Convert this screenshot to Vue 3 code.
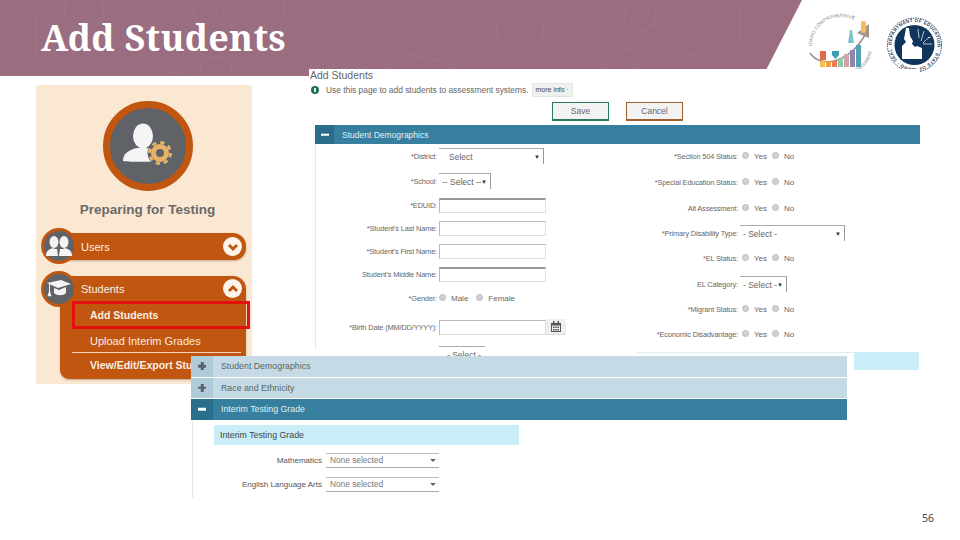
<template>
  <div class="slide">
    <header class="banner">
      <svg class="texture" width="810" height="76" viewBox="0 0 810 76" fill="none" stroke="#fff" stroke-opacity="0.06" stroke-width="1">
        <path d="M0 12h36v44H0M8 22h24M8 32h24M8 42h24" />
        <circle cx="84" cy="10" r="20" />
        <path d="M230 0l-16 26M285 0v20h36" />
        <circle cx="216" cy="72" r="16" />
        <circle cx="205" cy="12" r="12" />
        <path d="M130 62l60 14M380 76l16-24 50 10 12 14" />
        <circle cx="520" cy="30" r="24" />
        <circle cx="640" cy="16" r="16" />
        <path d="M600 76l8-14h24l12 14M690 0l-20 30 40 14 20-44" />
        <path d="M640 8l-22 40 78 8zM650 24l-12 20 40 4zM705 0l24 14 16-14M740 8v30" />
      </svg>
      <h1 class="slide-title">Add Students</h1>
    </header>

    <div class="logos">
      <svg class="logo-cc" width="66" height="60" viewBox="0 0 66 60">
        <defs>
          <path id="ccArc" d="M5 33A29 29 0 0 1 56 14" />
          <path id="ccArc2" d="M46 60A29 29 0 0 0 65 38" />
        </defs>
        <text class="logo-text" font-size="4.800" fill="#8d8d8d"><textPath href="#ccArc">IDAHO COMPREHENSIVE</textPath></text>
        <text class="logo-text" font-size="4.400" fill="#8d8d8d"><textPath href="#ccArc2">ASSESSMENT</textPath></text>
        <path d="M3 40C14 56 42 50 58 22" fill="none" stroke="#a3938f" stroke-width="1.600" />
        <path d="M50 20l12-9 0 14z" fill="#a3938f" />
        <rect x="13" y="38" width="6" height="9" fill="#e2694c" />
        <rect x="13" y="48" width="5" height="6" fill="#f0c24b" />
        <rect x="19" y="48" width="5" height="6" fill="#f09a4c" />
        <rect x="25" y="48" width="5" height="6" fill="#ec7d55" />
        <path d="M25 38h7v4l-3.500 4-3.500-4z" fill="#3a9fb0" />
        <rect x="31" y="45" width="5" height="9" fill="#8ec9a8" />
        <rect x="37" y="41" width="5" height="13" fill="#cfa3a5" />
        <rect x="43" y="37" width="5" height="17" fill="#8e86ad" />
        <rect x="49" y="32" width="5" height="22" fill="#4fa3b5" />
        <path d="M42 24l1-7 2 0 1 7 1 6h-6z" fill="#7cc3c5" />
        <rect x="54" y="8" width="5" height="12" rx="2" fill="#f3bd58" />
      </svg>
      <svg class="logo-seal" width="55" height="56" viewBox="0 0 55 56">
        <defs>
          <path id="sealArc" d="M4.500 28a23 23 0 1 1 46 0a23 23 0 1 1 -46 0" />
          <clipPath id="sealClip"><circle cx="27.500" cy="28" r="19" /></clipPath>
        </defs>
        <circle cx="27.500" cy="28" r="27" fill="#fff" stroke="#1d3f63" stroke-width="1" stroke-dasharray="1.500 1" />
        <text class="logo-text" font-size="4.500" font-weight="700" fill="#1d3f63"><textPath href="#sealArc" textLength="140">DEPARTMENT OF EDUCATION · STATE OF IDAHO · SEAL</textPath></text>
        <circle cx="27.500" cy="28" r="20" fill="#10355c" />
        <g clip-path="url(#sealClip)">
          <path d="M19 11h3l1 8 3 5-1 3 3 3 2-1 5 2v11H15V29l4-4-2-3z" fill="#fff" />
          <path d="M31 12l1 9M37 14l-3 10M42 20l-6 6M45 27h-9M44 20l-3 1" stroke="#fff" stroke-width="0.700" />
        </g>
      </svg>
    </div>

    <aside class="nav-card">
      <div class="hero-circle">
        <svg width="62" height="50" viewBox="0 0 62 50">
          <ellipse cx="26" cy="13" rx="10" ry="12.500" fill="#f5f5f5" />
          <path d="M6 38c0-7 5-11 14-13h10c3 1 5 2 7 4v9.500c-10 .5-21 .5-31-.5z" fill="#f5f5f5" />
          <circle cx="43" cy="30" r="12.500" fill="#5f6368" />
          <circle cx="43" cy="30" r="6.500" fill="none" stroke="#e6b469" stroke-width="5" />
          <circle cx="43" cy="30" r="10.500" fill="none" stroke="#e6b469" stroke-width="3" stroke-dasharray="4.200 4.050" />
        </svg>
      </div>
      <div class="nav-title">Preparing for Testing</div>

      <div class="nav-group">
        <div class="nav-head">
          <span class="nav-icon">
            <svg width="26" height="22" viewBox="0 0 26 22" fill="#f4f4f4">
              <ellipse cx="8" cy="7" rx="4.500" ry="6" />
              <ellipse cx="18" cy="7" rx="4.500" ry="6" />
              <path d="M0 21c0-5 3-7 7-8l2 1 2 0 1 7zM26 21c0-5-3-7-7-8l-2 1-3 0-1 7z" />
            </svg>
          </span>
          <span class="nav-label">Users</span>
          <span class="chev">
            <svg width="12" height="12" viewBox="0 0 12 12" fill="none" stroke="#c0560f" stroke-width="3"><path d="M2 4l4 4 4-4" /></svg>
          </span>
        </div>
      </div>

      <div class="nav-group open">
        <div class="nav-head">
          <span class="nav-icon">
            <svg width="26" height="22" viewBox="0 0 26 22" fill="#f4f4f4">
              <path d="M1 5l14-3 10 4-13 4z" />
              <path d="M8 10l5 2 7-3v6c-3 3-9 3-12 0z" />
              <path d="M3 6l1 .3v7l1.500 5H1.500l1.500-5z" />
            </svg>
          </span>
          <span class="nav-label">Students</span>
          <span class="chev">
            <svg width="12" height="12" viewBox="0 0 12 12" fill="none" stroke="#c0560f" stroke-width="3"><path d="M2 8l4-4 4 4" /></svg>
          </span>
        </div>
        <ul class="nav-sub">
          <li class="current">Add Students</li>
          <li>Upload Interim Grades</li>
          <li class="bold">View/Edit/Export Students</li>
        </ul>
      </div>
    </aside>

    <section class="shot main-shot">
      <div class="page-title">Add Students</div>
      <div class="info-line">
        <span class="info-dot"></span>
        <span>Use this page to add students to assessment systems.</span>
        <span class="more">more info ·</span>
      </div>
      <div class="actions">
        <button class="btn save">Save</button>
        <button class="btn cancel">Cancel</button>
      </div>
      <div class="section-head">
        <span class="toggle"><i class="minus"></i></span>
        <span>Student Demographics</span>
      </div>
      <div class="form">
        <div class="col left">
          <div v-for="r in leftRows" :key="r.label" class="row">
            <label>{{ r.label }}</label>
            <div v-if="r.select" class="select" :class="r.cls">{{ r.select }}<span class="tri">▼</span></div>
            <input v-else-if="r.input" class="field" :class="{ heavy: r.heavy }" type="text" />
            <div v-else-if="r.date" class="date">
              <input class="field" type="text" />
              <span class="cal">
                <svg width="10" height="11" viewBox="0 0 10 11" fill="#555">
                  <path d="M0 2h10v9H0zM1 4.500v5.500h8V4.500z" fill-rule="evenodd" />
                  <path d="M2 0h1.500v3H2zM6.500 0H8v3H6.500zM2 5.500h1.500V7H2zM4.300 5.500h1.500V7H4.300zM6.500 5.500H8V7H6.500zM2 8h1.500v1.500H2zM4.300 8h1.500v1.500H4.300zM6.500 8H8v1.500H6.500z" />
                </svg>
              </span>
            </div>
            <div v-else class="radios">
              <span v-for="o in r.options" :key="o" class="radio"><input type="radio" disabled />{{ o }}</span>
            </div>
          </div>
          <div class="row"><label></label><div class="select stub">- Select -</div></div>
        </div>
        <div class="col right">
          <div v-for="r in rightRows" :key="r.label" class="row">
            <label>{{ r.label }}</label>
            <div v-if="r.select" class="select" :class="r.cls">{{ r.select }}<span class="tri">▼</span></div>
            <div v-else class="radios">
              <span v-for="o in yn" :key="o" class="radio"><input type="radio" disabled />{{ o }}</span>
            </div>
          </div>
        </div>
      </div>
      <div class="strip"></div>
    </section>

    <section class="shot grade-shot">
      <div class="acc closed">
        <span class="toggle"><i class="minus"></i><i class="plus"></i></span>
        <span>Student Demographics</span>
      </div>
      <div class="acc closed">
        <span class="toggle"><i class="minus"></i><i class="plus"></i></span>
        <span>Race and Ethnicity</span>
      </div>
      <div class="acc active">
        <span class="toggle"><i class="minus"></i></span>
        <span>Interim Testing Grade</span>
      </div>
      <div class="grade-body">
        <div class="sub-head">Interim Testing Grade</div>
        <div class="grade-row">
          <label>Mathematics</label>
          <div class="multi">None selected<span class="caret"></span></div>
        </div>
        <div class="grade-row">
          <label>English Language Arts</label>
          <div class="multi">None selected<span class="caret"></span></div>
        </div>
      </div>
    </section>

    <div class="page-num">56</div>
  </div>
</template>

<script setup>
const yn = ['Yes', 'No']

const leftRows = [
  { label: '*District:', select: 'Select', cls: 'district' },
  { label: '*School:', select: '-- Select --', cls: 'school' },
  { label: '*EDUID:', input: true, heavy: true },
  { label: "*Student's Last Name:", input: true },
  { label: "*Student's First Name:", input: true },
  { label: "Student's Middle Name:", input: true, heavy: true },
  { label: '*Gender:', options: ['Male', 'Female'] },
  { label: '*Birth Date (MM/DD/YYYY):', date: true }
]

const rightRows = [
  { label: '*Section 504 Status:' },
  { label: '*Special Education Status:' },
  { label: 'Alt Assessment:' },
  { label: '*Primary Disability Type:', select: '- Select -', cls: 'disability' },
  { label: '*EL Status:' },
  { label: 'EL Category:', select: '- Select -', cls: 'category' },
  { label: '*Migrant Status:' },
  { label: '*Economic Disadvantage:' }
]
</script>

<style>
html,
body {
  margin: 0;
  background: #fff;
}
</style>

<style scoped>
.slide {
  position: relative;
  width: 960px;
  height: 540px;
  overflow: hidden;
  background: #fff;
  font-family: "Liberation Sans", Arial, sans-serif;
}

.banner {
  height: 76px;
  width: 810px;
  background: #9a6d80;
  clip-path: polygon(0 0, 802px 0, 763px 76px, 0 76px);
  position: relative;
}

.texture {
  position: absolute;
  left: 0;
  top: 0;
}

.slide-title {
  margin: 0;
  padding: 14px 0 0 41px;
  font-family: "Noto Serif", "Liberation Serif", serif;
  font-weight: 700;
  font-size: 36px;
  line-height: 48px;
  letter-spacing: 0.25px;
  color: #fff;
}

.logos {
  position: absolute;
  left: 807px;
  top: 17px;
  display: flex;
  align-items: flex-start;
  gap: 14px;
}

.logo-cc {
  margin-top: -4px;
}

.logo-text {
  font-family: "Liberation Sans", sans-serif;
}

.nav-card {
  position: absolute;
  left: 36px;
  top: 85px;
  width: 216px;
  height: 299px;
  box-sizing: border-box;
  padding-top: 16px;
  background: #fbe8d2;
  border-radius: 2px;
}

.hero-circle {
  width: 76px;
  height: 76px;
  margin-left: 67px;
  display: flex;
  align-items: center;
  justify-content: center;
  border: 7px solid #c0560f;
  border-radius: 50%;
  background: #5f6368;
}

.hero-circle svg {
  margin-top: 4px;
}

.nav-title {
  margin-top: 11px;
  text-align: center;
  font-size: 13.500px;
  line-height: 16px;
  font-weight: 700;
  color: #6a6a6a;
  padding-left: 10px;
  padding-right: 3px;
}

.nav-group {
  position: relative;
  margin: 15px 6px 0 24px;
  background: #c0560f;
  border-radius: 9px 13px 12px 9px;
  box-shadow: 0 1px 2px rgba(90, 50, 20, 0.35);
}

.nav-head {
  height: 27px;
  display: flex;
  align-items: center;
  justify-content: space-between;
  padding: 0 4px 0 21px;
  color: #fbeee2;
  font-size: 11px;
}

.nav-group.open {
  margin-top: 16px;
}

.nav-group.open .nav-head {
  height: 25px;
}

.nav-icon {
  position: absolute;
  left: -19px;
  top: -5px;
  width: 30px;
  height: 30px;
  display: flex;
  align-items: center;
  justify-content: center;
  border: 3px solid #c0560f;
  border-radius: 50%;
  background: #5f6368;
}

.chev {
  width: 19px;
  height: 19px;
  display: flex;
  align-items: center;
  justify-content: center;
  background: #fdf5ec;
  border-radius: 50%;
}

.nav-sub {
  list-style: none;
  margin: 0;
  padding: 0 0 2px 0;
  color: #fbeee2;
  font-size: 11px;
}

.nav-sub li {
  height: 24px;
  line-height: 24px;
  margin-left: 12px;
  padding-left: 18px;
  margin-right: 5px;
  white-space: nowrap;
  overflow: hidden;
}

.nav-sub li.current {
  position: relative;
  height: 28px;
  line-height: 28px;
  margin: 0 -4px 0 12px;
  padding-left: 18px;
  font-size: 10.500px;
  font-weight: 700;
}

.nav-sub li.current::after {
  content: "";
  position: absolute;
  inset: 0;
  border: 3px solid #e60f0f;
}

.nav-sub li:nth-child(2) {
  height: 23px;
  border-bottom: 1px solid #f2d3b8;
}

.nav-sub li.bold {
  font-weight: 700;
  font-size: 10.500px;
}

.shot {
  position: absolute;
  background: #fff;
  color: #555;
  font-size: 8.500px;
}

.main-shot {
  left: 309px;
  top: 69px;
  width: 611px;
  height: 301px;
  overflow: hidden;
}

.page-title {
  padding-left: 1px;
  font-size: 10.500px;
  line-height: 12px;
  color: #666;
}

.info-line {
  display: flex;
  align-items: center;
  height: 14px;
  margin-top: 2px;
  padding-left: 2px;
  font-size: 8.400px;
  color: #666;
}

.info-dot {
  position: relative;
  width: 8px;
  height: 8px;
  margin-right: 7px;
  border-radius: 50%;
  background: #1f7050;
}

.info-dot::after {
  content: "";
  position: absolute;
  left: 3px;
  top: 2px;
  width: 2px;
  height: 4px;
  background: #d7efe4;
}

.more {
  margin-left: 3px;
  padding: 2px 3px;
  background: #eef1ee;
  border: 1px solid #e2e5e2;
  color: #444;
  font-size: 7px;
  line-height: 8px;
}

.actions {
  display: flex;
  gap: 17px;
  margin: 5px 0 0 243px;
}

.btn {
  width: 57px;
  height: 19px;
  padding: 0;
  font-family: inherit;
  font-size: 8.500px;
  color: #666;
  background: #f3f3f3;
  box-sizing: border-box;
}

.btn.save {
  border: 1.500px solid #2d7a5a;
  border-bottom-width: 2px;
}

.btn.cancel {
  border: 1.500px solid #a0602e;
  border-bottom-width: 2px;
}

.section-head {
  display: flex;
  align-items: center;
  gap: 8px;
  height: 19px;
  margin: 4px 0 0 6px;
  background: #367f9e;
  color: #e4f0f4;
  font-size: 8.500px;
}

.toggle {
  position: relative;
  flex: none;
  display: block;
  width: 19px;
  height: 100%;
  background: #2b6e8b;
}

.minus,
.plus {
  position: absolute;
  left: 50%;
  top: 50%;
  background: #fff;
}

.minus {
  width: 8px;
  height: 2.500px;
  transform: translate(-50%, -50%);
}

.plus {
  width: 2.500px;
  height: 8px;
  transform: translate(-50%, -50%);
}

.form {
  display: flex;
  margin-left: 6px;
  height: 206px;
  border-left: 1px solid #e6e6e6;
}

.col {
  display: grid;
}

.col.left {
  width: 320px;
  grid-template-columns: 121px 1fr;
  grid-template-rows: 24px 26px 22px 24px 22px 24px 24px 34px 16px;
}

.col.right {
  width: 284px;
  grid-template-columns: 102px 1fr;
  grid-template-rows: 24px 28px 24px 26px 24px 28px 22px 28px;
}

.row {
  display: contents;
}

.row label {
  align-self: center;
  text-align: right;
  white-space: nowrap;
  font-size: 7.400px;
  letter-spacing: -0.15px;
  color: #666;
}

.select {
  position: relative;
  align-self: center;
  justify-self: start;
  margin-left: 2px;
  height: 16px;
  line-height: 16px;
  box-sizing: border-box;
  padding-left: 3px;
  border-top: 1px solid #aaa;
  border-right: 1px solid #999;
  font-size: 8.500px;
  color: #666;
}

.select.district {
  width: 105px;
  padding-left: 10px;
}

.select.school {
  width: 52px;
}

.select.disability {
  width: 105px;
}

.select.category {
  width: 47px;
}

.select.stub {
  width: 46px;
  height: 15px;
  margin-top: 2px;
  padding-left: 8px;
  border-right: 0;
}

.tri {
  position: absolute;
  right: 3px;
  top: 0;
  font-size: 6px;
  color: #333;
}

.field {
  align-self: center;
  margin: 0 0 0 2px;
  width: 107px;
  height: 15px;
  padding: 0;
  box-sizing: border-box;
  background: #fff;
  border: 1px solid #e0e0e0;
  border-left-color: #bbb;
  border-top-color: #bbb;
}

.field.heavy {
  border-top: 2px solid #999;
}

.date {
  display: flex;
  align-self: center;
}

.date .field {
  flex: none;
}

.cal {
  width: 20px;
  height: 15px;
  display: flex;
  align-items: center;
  justify-content: center;
  background: #eee;
  border-bottom: 1px solid #ddd;
}

.radios {
  display: flex;
  align-self: center;
  gap: 5px;
  margin-left: 4px;
  font-size: 8px;
  color: #666;
}

.col.left .radios {
  gap: 8px;
  margin-left: 2px;
}

.radio {
  display: flex;
  align-items: center;
  gap: 5px;
}

.radio input {
  appearance: none;
  width: 7px;
  height: 7px;
  margin: 0 0 2px;
  border-radius: 50%;
  background: #d2d2d2;
  border: 1px solid #bcbcbc;
}

.strip {
  position: absolute;
  right: 1px;
  bottom: 0;
  width: 65px;
  height: 18px;
  background: #c9eef7;
}

.strip::before {
  content: "";
  position: absolute;
  right: 65px;
  top: 0;
  width: 217px;
  height: 1px;
  background: #dcebef;
}

.grade-shot {
  left: 191px;
  top: 356px;
  width: 656px;
  height: 142px;
  display: flex;
  flex-direction: column;
  gap: 1px;
}

.acc {
  display: flex;
  align-items: center;
  gap: 8px;
  height: 20.500px;
  font-size: 8.800px;
}

.acc .toggle {
  width: 22px;
}

.acc.closed {
  background: #c5dae4;
  color: #566;
}

.acc.closed .toggle {
  background: #b0cbd8;
}

.acc.closed .minus,
.acc.closed .plus {
  background: #59646a;
}

.acc.active {
  background: #367f9e;
  color: #e4f0f4;
}

.grade-body {
  flex: 1;
  margin-left: 1px;
  padding: 4px 0 0 21px;
  border-left: 1px solid #e6e6e6;
}

.sub-head {
  width: 299px;
  height: 20px;
  padding-left: 6px;
  line-height: 20px;
  font-size: 8.800px;
  color: #444;
  background: #c9eef7;
}

.grade-row {
  display: flex;
  align-items: center;
  gap: 4px;
  margin: 9px 0 0 0;
  height: 15px;
}

.grade-row:nth-child(2) {
  margin-top: 8px;
}

.grade-row label {
  width: 108px;
  text-align: right;
  font-size: 8px;
  color: #555;
  white-space: nowrap;
}

.multi {
  position: relative;
  width: 113px;
  height: 15px;
  box-sizing: border-box;
  padding-left: 4px;
  line-height: 13px;
  border-top: 1px solid #bbb;
  border-bottom: 1px solid #aaa;
  font-size: 8.300px;
  color: #777;
}

.caret {
  position: absolute;
  right: 3px;
  top: 5px;
  border: 3.500px solid transparent;
  border-top: 3.500px solid #666;
  border-bottom: 0;
}

.page-num {
  position: absolute;
  left: 922px;
  top: 512px;
  font-family: "Noto Sans", "Open Sans", sans-serif;
  font-size: 10.500px;
  line-height: 13px;
  color: #444;
}
</style>
